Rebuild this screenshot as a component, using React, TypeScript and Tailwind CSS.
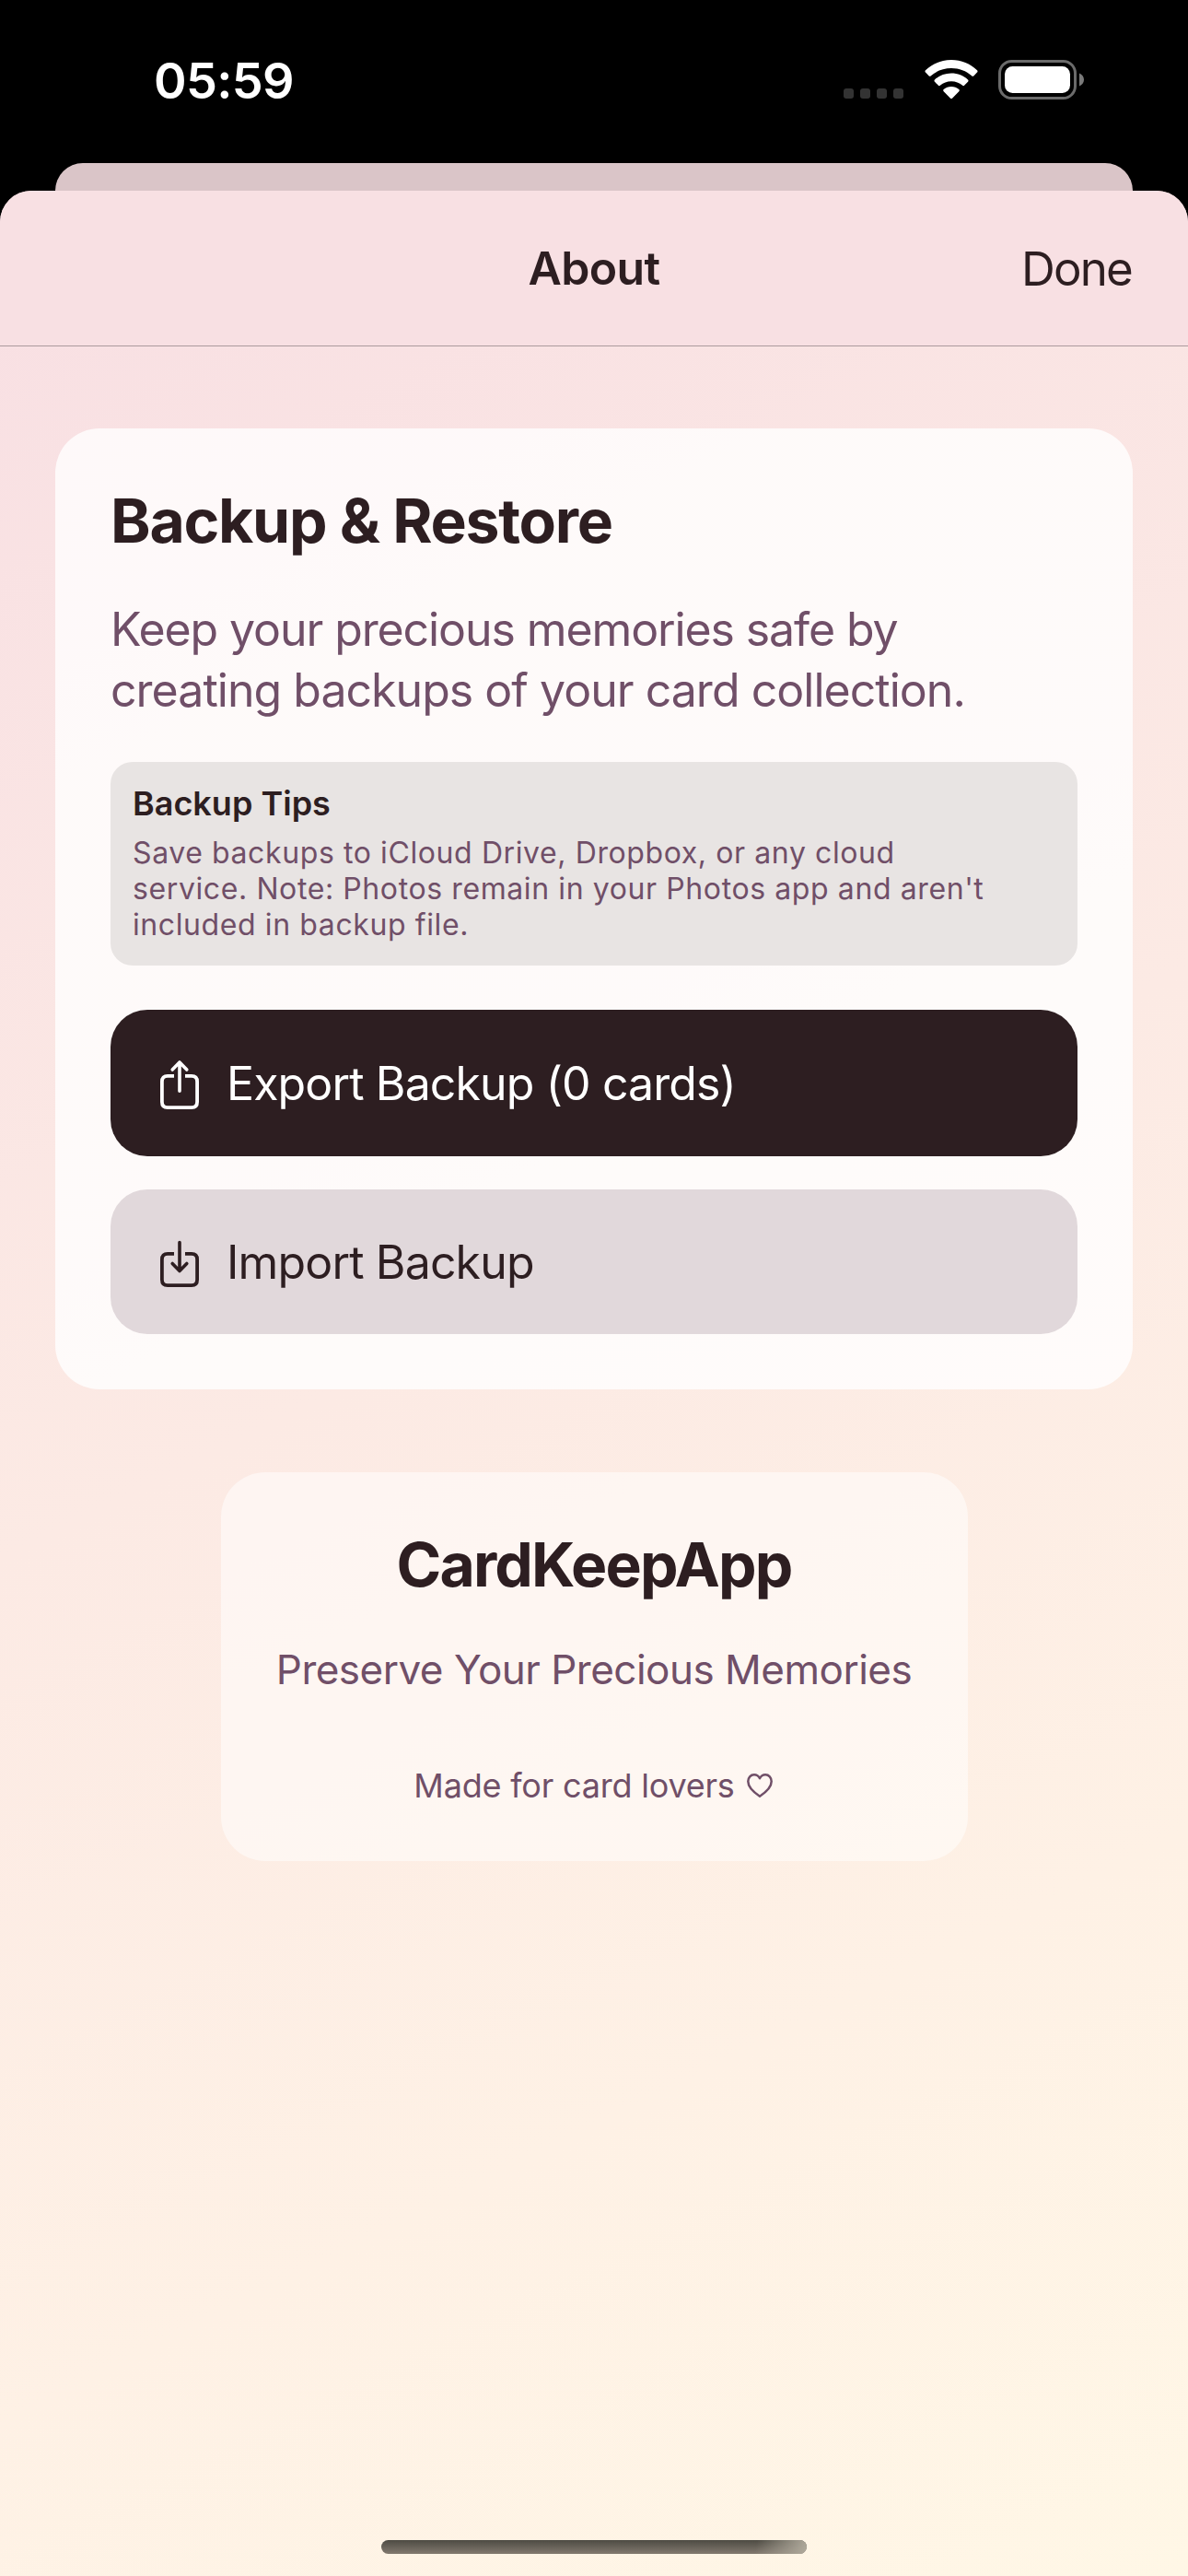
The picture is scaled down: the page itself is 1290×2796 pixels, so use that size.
import React from "react";

function StatusBar() {
  return (
    <div className="flex h-[177px] items-start justify-between pl-[167px] pr-[113px] text-white">
      <span className="mt-[56px] text-[54px] leading-[64px] font-semibold tracking-[-0.7px]">05:59</span>
      <div className="mt-[65px] flex h-[44px] items-start">
        <div className="mt-[31px] mr-[23px] flex gap-[7px]">
          {[0, 1, 2, 3].map((i) => (
            <span key={i} className="h-[11px] w-[11px] rounded-[3px] bg-[#333333]" />
          ))}
        </div>
        <svg className="mr-[22px] h-[42px] w-[58px]" viewBox="0 0 58 42" fill="currentColor">
          <path d="M29 0C40 0 49.500 4.300 57 11.200C57.700 11.900 57.700 12.900 57 13.600L53.500 17.300C52.800 18 51.800 18 51.100 17.300C45.300 12 37.500 9 29 9C20.500 9 12.700 12 6.900 17.300C6.200 18 5.200 18 4.500 17.300L1 13.600C.3 12.900.3 11.900 1 11.200C8.500 4.300 18 0 29 0Z" />
          <path d="M29 14.500C35.900 14.500 42.200 17.100 47 21.400C47.700 22.100 47.700 23.100 47 23.800L43.300 27.600C42.600 28.300 41.700 28.300 40.900 27.600C37.700 24.900 33.700 23.300 29 23.300C24.300 23.300 20.300 24.900 17.100 27.600C16.300 28.300 15.400 28.300 14.700 27.600L11 23.800C10.300 23.100 10.300 22.100 11 21.400C15.800 17.100 22.100 14.500 29 14.500Z" />
          <path d="M29 29C32.200 29 35 30.100 37.300 31.900C38 32.500 38 33.500 37.300 34.200L30.200 41.400C29.500 42.100 28.500 42.100 27.800 41.400L20.700 34.200C20 33.500 20 32.500 20.700 31.900C23 30.100 25.800 29 29 29Z" />
        </svg>
        <svg className="h-[43px] w-[93px]" viewBox="0 0 93 43" fill="none">
          <rect x="1.500" y="1.500" width="82" height="40" rx="13" stroke="#6b6b6b" strokeWidth="3" />
          <rect x="7" y="7" width="71" height="29" rx="8.500" fill="white" />
          <path d="M88 14.500C91 15.700 93 18.300 93 21.500S91 27.300 88 28.500Z" fill="#7a7a7a" />
        </svg>
      </div>
    </div>
  );
}

const shapes = {
  export: {
    tray: "M16 21.900H9Q2.900 21.900 2.900 28V50Q2.900 56.100 9 56.100H35Q41.100 56.100 41.100 50V28Q41.100 21.900 35 21.900H28",
    arrow: "M22 7V38.300M14.200 15L22 7L29.800 15",
  },
  import: {
    tray: "M16 20.900H9Q2.900 20.900 2.900 27V49Q2.900 55.100 9 55.100H35Q41.100 55.100 41.100 49V27Q41.100 20.900 35 20.900H28",
    arrow: "M22 8.500V39.500M14.200 31.500L22 39.500L29.800 31.500",
  },
};

function TrayIcon({ kind }: { kind: "export" | "import" }) {
  return (
    <svg className="h-[59px] w-[44px] shrink-0" viewBox="0 0 44 59" fill="none" stroke="currentColor" strokeLinejoin="round">
      <path d={shapes[kind].tray} strokeWidth="3.800" />
      <path d={shapes[kind].arrow} strokeWidth="3.600" strokeLinecap="round" />
    </svg>
  );
}

export default function App() {
  return (
    <div className="flex h-[2796px] w-[1290px] flex-col overflow-hidden bg-black font-['Inter',sans-serif] text-[#2d1e21]">
      <StatusBar />
      <div className="mx-[60px] h-[30px] rounded-t-[30px] bg-[#dac5c8]" />
      <div className="relative flex flex-1 flex-col overflow-hidden rounded-t-[34px] bg-[linear-gradient(153.5deg,#f8dfe3_0%,#fceae4_46%,#fef1e5_75%,#fff7e6_100%)]">
        <header className="grid h-[169px] grid-cols-3 items-center border-b border-[#ab9a9d] bg-[#f8e0e3] px-[60px] text-[51px]">
          <span />
          <h1 className="text-center text-[50px] font-semibold tracking-[-0.7px]">About</h1>
          <span className="mt-[2px] mr-[1px] text-right tracking-[-1.8px]">Done</span>
        </header>
        <main className="flex flex-col items-center px-[60px] pt-[89px]">
          <section className="flex h-[1043px] w-full flex-col rounded-[48px] bg-white/80 px-[60px] pt-[60px]">
            <h2 className="text-[66px] leading-[80px] font-bold tracking-[-1.25px]">Backup &amp; Restore</h2>
            <p className="mt-[45px] text-[50px] leading-[66px] tracking-[-0.97px] text-[#704f68]">
              <span className="tracking-[-1.1px]">Keep your precious memories safe by</span>
              <br />
              creating backups of your card collection.
            </p>
            <div className="mt-[45px] h-[221px] rounded-[24px] bg-[#e8e4e3] px-[24px] pt-[23px]">
              <h3 className="text-[36px] leading-[44px] font-semibold">Backup Tips</h3>
              <p className="mt-[12px] text-[32px] leading-[39px] tracking-[0.6px] text-[#704f68]">Save backups to iCloud Drive, Dropbox, or any cloud<br />service. Note: Photos remain in your Photos app and aren't<br />included in backup file.</p>
            </div>
            <button className="mt-[48px] flex h-[159px] shrink-0 items-center rounded-[40px] bg-[#2d1e21] pl-[53px] text-[50px] tracking-[-0.88px] text-white">
              <TrayIcon kind="export" />
              <span className="mt-[2px] ml-[29px]">Export Backup (0 cards)</span>
            </button>
            <button className="mt-[36px] flex h-[157px] shrink-0 items-center rounded-[40px] bg-[#e1d8db] pl-[53px] text-[50px] tracking-[-0.86px]">
              <TrayIcon kind="import" />
              <span className="mt-[2px] ml-[29px]">Import Backup</span>
            </button>
          </section>
          <section className="mt-[90px] flex h-[422px] w-[811px] flex-col items-center rounded-[48px] bg-white/50 pt-[60px]">
            <h2 className="text-[66px] leading-[80px] font-bold tracking-[-1.85px]">CardKeepApp</h2>
            <p className="mt-[46px] text-[44px] leading-[56px] tracking-[-0.5px] text-[#704f68]">Preserve Your Precious Memories</p>
            <p className="mt-[76px] mr-[2px] flex items-center text-[36px] leading-[44px] tracking-[-0.2px] text-[#704f68]">
              <span>Made for card lovers</span>
              <svg className="ml-[13px] h-[26px] w-[28px]" viewBox="0 0 28 26" fill="none" stroke="currentColor" strokeWidth="2.500" strokeLinejoin="round">
                <path d="M14 24.700C8 20.800 1.300 14.800 1.300 8.600C1.300 4.300 4.200 1.300 7.900 1.300C10.700 1.300 12.800 2.900 14 5.300C15.200 2.900 17.300 1.300 20.100 1.300C23.800 1.300 26.700 4.300 26.700 8.600C26.700 14.800 20 20.800 14 24.700Z" />
              </svg>
            </p>
          </section>
        </main>
        <div className="absolute bottom-[24px] left-[414px] h-[15px] w-[462px] overflow-hidden rounded-full bg-[linear-gradient(to_bottom,#4d4b43,#82796f)]">
          <div className="ml-auto h-full w-[60px] bg-[linear-gradient(100deg,transparent_10%,#b0aa9c_100%)]" />
        </div>
      </div>
    </div>
  );
}
